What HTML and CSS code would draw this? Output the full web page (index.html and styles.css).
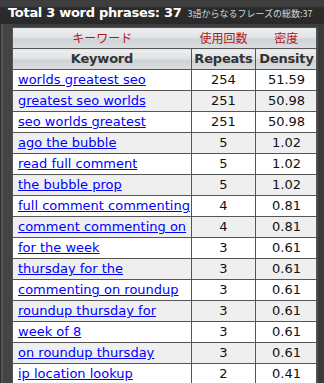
FILE: index.html
```html
<!DOCTYPE html>
<html>
<head>
<meta charset="utf-8">
<link rel="stylesheet" href="styles.css">
</head>
<body>
<div class="panel">
  <div class="title"><span class="title-en">Total 3 word phrases: 37</span><span class="title-ja">3語からなるフレーズの総数:37</span></div>
  <div class="frame">
    <div class="inner">
      <table class="kw">
        <colgroup><col class="col-kw"><col class="col-rep"><col class="col-den"></colgroup>
        <thead>
          <tr class="ja"><th class="c-kw">キーワード</th><th>使用回数</th><th>密度</th></tr>
          <tr class="en"><th class="c-kw">Keyword</th><th>Repeats</th><th>Density</th></tr>
        </thead>
        <tbody>
          <tr><td class="c-kw"><a href="#">worlds greatest seo</a></td><td>254</td><td>51.59</td></tr>
          <tr><td class="c-kw"><a href="#">greatest seo worlds</a></td><td>251</td><td>50.98</td></tr>
          <tr><td class="c-kw"><a href="#">seo worlds greatest</a></td><td>251</td><td>50.98</td></tr>
          <tr><td class="c-kw"><a href="#">ago the bubble</a></td><td>5</td><td>1.02</td></tr>
          <tr><td class="c-kw"><a href="#">read full comment</a></td><td>5</td><td>1.02</td></tr>
          <tr><td class="c-kw"><a href="#">the bubble prop</a></td><td>5</td><td>1.02</td></tr>
          <tr><td class="c-kw"><a href="#">full comment commenting</a></td><td>4</td><td>0.81</td></tr>
          <tr><td class="c-kw"><a href="#">comment commenting on</a></td><td>4</td><td>0.81</td></tr>
          <tr><td class="c-kw"><a href="#">for the week</a></td><td>3</td><td>0.61</td></tr>
          <tr><td class="c-kw"><a href="#">thursday for the</a></td><td>3</td><td>0.61</td></tr>
          <tr><td class="c-kw"><a href="#">commenting on roundup</a></td><td>3</td><td>0.61</td></tr>
          <tr><td class="c-kw"><a href="#">roundup thursday for</a></td><td>3</td><td>0.61</td></tr>
          <tr><td class="c-kw"><a href="#">week of 8</a></td><td>3</td><td>0.61</td></tr>
          <tr><td class="c-kw"><a href="#">on roundup thursday</a></td><td>3</td><td>0.61</td></tr>
          <tr><td class="c-kw"><a href="#">ip location lookup</a></td><td>2</td><td>0.41</td></tr>
        </tbody>
      </table>
    </div>
    <div class="scroll"></div>
  </div>
</div>
</body>
</html>
```

FILE: styles.css
```css
html, body {
  margin: 0;
  padding: 0;
  background: #3c3c3c;
  overflow: hidden;
}
.panel {
  width: 324px;
  height: 383px;
  display: flex;
  flex-direction: column;
  font-family: "DejaVu Sans", Verdana, sans-serif;
}
.title {
  height: 24px;
  box-sizing: border-box;
  padding: 5px 0 0 8px;
  background: linear-gradient(#3f3f3f 0, #3f3f3f 6px, #2b2b2b 8px, #2a2a2a 100%);
  display: flex;
  align-items: baseline;
  white-space: nowrap;
  overflow: hidden;
}
.title-en {
  color: #ffffff;
  font-weight: bold;
  font-size: 13px;
  letter-spacing: -0.3px;
}
.title-ja {
  color: #d8d8d8;
  font-family: "Noto Sans CJK JP", sans-serif;
  font-size: 9px;
  margin-left: 6px;
}
.frame {
  flex: 1;
  display: flex;
  padding: 3px 0 0 0;
  background: linear-gradient(90deg, #2e2e2e 0, #2e2e2e 1px, #555 1px, #555 3px, #444 3px, #444 12px, transparent 12px);
  min-height: 0;
}
.inner {
  margin-left: 12px;
  width: 304px;
  background: #fff;
  overflow: hidden;
}
.scroll {
  width: 8px;
  background: linear-gradient(90deg, #505050 0, #505050 2px, #3a3a3a 2px, #3a3a3a 100%);
}
.kw {
  width: 305px;
  table-layout: fixed;
  border-collapse: collapse;
  font-size: 13px;
  margin: 0;
}
.col-kw { width: 179px; }
.col-rep { width: 64px; }
.col-den { width: 62px; }
.kw th, .kw td {
  border: 1px solid #555;
  padding: 0 0 1px 0;
  height: 19px;
  line-height: 19px;
  text-align: center;
  white-space: nowrap;
  overflow: hidden;
}
.kw tr.ja th {
  border-left: 1px solid #555;
  border-right: none;
}
.kw tr.ja th + th {
  border-left: none;
}
.kw tr.ja th:last-child {
  border-right: 1px solid #555;
}
.kw tr.ja th {
  background: linear-gradient(#eceeef 0, #e1e3e5 45%, #cfd2d4 55%, #dcdee0 100%);
  color: #b01818;
  font-family: "Noto Sans CJK JP", sans-serif;
  font-weight: normal;
  font-size: 12px;
  padding: 0;
  height: 19px;
  line-height: 20px;
}
.kw tr.en th {
  background: linear-gradient(#eceeef 0, #e1e3e5 45%, #cfd2d4 55%, #dcdee0 100%);
  color: #333;
  font-weight: bold;
  font-size: 13px;
  letter-spacing: -0.2px;
}
.kw td.c-kw {
  text-align: left;
  padding-left: 5px;
}
.kw td {
  color: #111;
}
.kw tbody tr:nth-child(even) td {
  background: #efefef;
}
.kw a {
  color: #0000ff;
  text-decoration: underline;
}
```
